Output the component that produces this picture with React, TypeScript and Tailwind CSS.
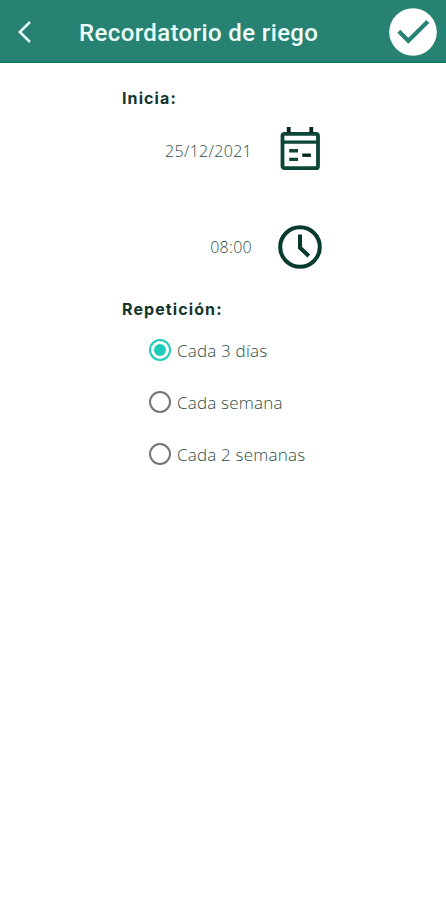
import { useState } from "react";
import type { ReactNode } from "react";

const OPTIONS = ["Cada 3 días", "Cada semana", "Cada 2 semanas"];

function BackIcon() {
  return (
    <svg width="14" height="22" viewBox="0 0 14 22" fill="none" stroke="#e6fbf5" strokeWidth="2.5">
      <path d="M12 1 1.8 11 12 21" />
    </svg>
  );
}

function CheckIcon() {
  return (
    <svg width="48" height="48" viewBox="0 0 48 48" fill="none">
      <circle cx="24" cy="24" r="23.8" fill="#fff" />
      <path d="M9.8 23.2 19.3 32.8 38.8 13.4" stroke="#288273" strokeWidth="4.2" />
    </svg>
  );
}

function CalendarIcon() {
  return (
    <svg width="40" height="44" viewBox="0 0 40 44" fill="none" stroke="#0b4639" strokeWidth="3.8">
      <rect x="2.5" y="6.8" width="35.5" height="34.4" rx="2" />
      <path d="M2.5 15.2h35.5" strokeWidth="3.2" />
      <path d="M8.7 0v6M31.3 0v6" stroke="#07261f" />
      <path d="M9.2 23.8h8.8M9.2 32.4h8.8" strokeWidth="3.4" />
      <path d="M22.3 28.2h8.6" stroke="#07261f" strokeWidth="3.4" />
    </svg>
  );
}

function ClockIcon() {
  return (
    <svg width="44" height="44" viewBox="0 0 44 44" fill="none" stroke="#073b30" strokeWidth="4">
      <circle cx="22" cy="22" r="19.8" />
      <path d="M22 9.5v13.3l8.8 8.2" />
    </svg>
  );
}

function Heading({ children }: { children: ReactNode }) {
  return (
    <h2 className="h-6 whitespace-nowrap font-[Inter,sans-serif] text-[16px] leading-6 font-bold tracking-[1.1px] text-[#12352e]">
      {children}
    </h2>
  );
}

export default function App() {
  const [selected, setSelected] = useState(0);

  return (
    <div className="min-h-[900px] bg-white font-['Open_Sans',sans-serif] text-[#2c4d46]">
      <header className="flex h-[63px] items-center border-b-2 border-[#117a69] bg-[#288273] pt-[2px] pr-[9px] pl-[18px]">
        <button type="button" aria-label="Volver">
          <BackIcon />
        </button>
        <h1 className="ml-[47px] flex-1 pt-[3px] font-[Roboto,sans-serif] text-[24px] leading-8 font-medium tracking-[0.38px] whitespace-nowrap text-[#ecfffa]">
          Recordatorio de riego
        </h1>
        <button type="button" aria-label="Guardar">
          <CheckIcon />
        </button>
      </header>

      <main className="pt-[23px] pl-[122px]">
        <Heading>Inicia:</Heading>
        <div className="mt-4 flex h-[46px] w-[200px] items-center justify-between">
          <span className="w-[130px] pt-[3px] text-right text-[16px] font-light tracking-[0.3px]">
            25/12/2021
          </span>
          <div className="flex w-11 justify-center">
            <CalendarIcon />
          </div>
        </div>
        <div className="mt-[52px] flex h-[46px] w-[200px] items-center justify-between">
          <span className="w-[130px] text-right text-[16px] font-light tracking-[0.3px]">08:00</span>
          <ClockIcon />
        </div>

        <div className="mt-[27px]">
          <Heading>Repetición:</Heading>
        </div>
        <div className="mt-[3px] pl-[27px]" role="radiogroup">
          {OPTIONS.map((label, i) => (
            <button
              key={label}
              type="button"
              role="radio"
              aria-checked={selected === i}
              onClick={() => setSelected(i)}
              className="flex h-[52px] items-center gap-[6px]"
            >
              <span
                className={
                  selected === i
                    ? "flex size-[22px] items-center justify-center rounded-full border-2 border-[#1dcdbb]"
                    : "flex size-[22px] items-center justify-center rounded-full border-2 border-[#757575]"
                }
              >
                {selected === i && <span className="size-3 rounded-full bg-[#1dcdbb]" />}
              </span>
              <span className="pt-px text-[17px] font-light tracking-[0.2px] whitespace-nowrap">{label}</span>
            </button>
          ))}
        </div>
      </main>
    </div>
  );
}
